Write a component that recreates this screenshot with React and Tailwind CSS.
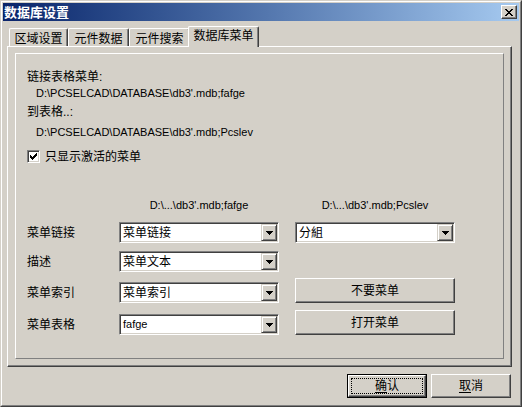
import React from "react";

const FONT = "font-['Liberation_Sans','Noto_Sans_CJK_SC',sans-serif]";

function Arrow() {
  return (
    <svg width="7" height="4" viewBox="0 0 7 4" shapeRendering="crispEdges">
      <path d="M0 0h7v1H0z M1 1h5v1H1z M2 2h3v1H2z M3 3h1v1H3z" fill="#000" />
    </svg>
  );
}

function Combo({ text, latin }) {
  return (
    <div className="w-[160px] h-[21px] flex bg-white border border-t-[#808080] border-l-[#808080] border-r-white border-b-white shadow-[inset_1px_1px_#404040,inset_-1px_-1px_#d4d0c8] p-px">
      <div className={"flex-1 flex items-center pl-[2px] leading-none " + (latin ? "text-[11px]" : "text-[12px]")}>{text}</div>
      <div className="w-[16px] h-[17px] bg-[#d4d0c8] border border-t-[#d4d0c8] border-l-[#d4d0c8] border-r-[#404040] border-b-[#404040] shadow-[inset_1px_1px_white,inset_-1px_-1px_#808080] flex items-center justify-center">
        <Arrow />
      </div>
    </div>
  );
}

function Btn({ children }) {
  return (
    <div className="w-[160px] h-[25px] flex items-center justify-center text-[12px] border border-t-white border-l-white border-r-[#404040] border-b-[#404040] shadow-[inset_-1px_-1px_#808080]">
      {children}
    </div>
  );
}

export default function App() {
  return (
    <div className={"w-[522px] h-[407px] bg-[#d4d0c8] text-black border border-t-[#d4d0c8] border-l-[#d4d0c8] border-r-[#404040] border-b-[#404040] " + FONT}>
      <div className="h-full border border-t-white border-l-white border-r-[#808080] border-b-[#808080] p-px flex flex-col">
        {/* Title bar */}
        <div className="h-[18px] flex items-center bg-linear-to-r from-[#0a246a] to-[#a6caf0] pr-[2px]">
          <span className="text-white font-bold text-[13px] leading-none pl-px">数据库设置</span>
          <div className="ml-auto w-[16px] h-[14px] bg-[#d4d0c8] border border-t-white border-l-white border-r-[#404040] border-b-[#404040] shadow-[inset_-1px_-1px_#808080] flex items-center justify-center">
            <svg width="8" height="7" viewBox="0 0 8 7" shapeRendering="crispEdges" className="-ml-px">
              <path d="M0 0h2v1H0z M6 0h2v1H6z M1 1h2v1H1z M5 1h2v1H5z M2 2h4v1H2z M3 3h2v1H3z M2 4h4v1H2z M1 5h2v1H1z M5 5h2v1H5z M0 6h2v1H0z M6 6h2v1H6z" fill="#000" />
            </svg>
          </div>
        </div>

        {/* Tabs */}
        <div className="mt-[5px] ml-[6px] h-[20px] flex items-end relative z-10">
          <div className="w-[59px] h-[18px] flex items-center justify-center pt-[2px] text-[12px] border-t border-l border-t-white border-l-white border-r border-r-[#404040] shadow-[inset_-1px_0_#808080] rounded-tl-[2px] rounded-tr-[2px]">区域设置</div>
          <div className="w-[61px] h-[18px] flex items-center justify-center pt-[2px] text-[12px] border-t border-l border-t-white border-l-white border-r border-r-[#404040] shadow-[inset_-1px_0_#808080] rounded-tl-[2px] rounded-tr-[2px]">元件数据</div>
          <div className="w-[61px] h-[18px] flex items-center justify-center pt-[2px] text-[12px] border-t border-l border-t-white border-l-white border-r border-r-[#404040] shadow-[inset_-1px_0_#808080] rounded-tl-[2px] rounded-tr-[2px]">元件搜索</div>
          <div className="-ml-[2px] w-[71px] h-[21px] -mb-px bg-[#d4d0c8] flex items-center justify-center pb-[2px] text-[12px] border-t border-l border-t-white border-l-white border-r border-r-[#404040] shadow-[inset_-1px_0_#808080] rounded-tl-[2px] rounded-tr-[2px]">数据库菜单</div>
        </div>

        {/* Panel */}
        <div className="ml-[4px] w-[505px] h-[321px] border border-t-white border-l-white border-r-[#404040] border-b-[#404040] shadow-[inset_-1px_-1px_#808080] pl-[7px] pt-[6px]">
          <div className="w-[489px] h-[306px] border border-t-white border-l-white border-r-[#808080] border-b-[#808080] flex flex-col pl-[11px] pt-[16px]">
            <div className="h-[14px] leading-[14px] text-[12px]">链接表格菜单:</div>
            <div className="mt-[2px] ml-[9px] h-[14px] leading-[14px] text-[11px]">D:\PCSELCAD\DATABASE\db3'.mdb;fafge</div>
            <div className="mt-[5px] h-[14px] leading-[14px] text-[12px]">到表格..:</div>
            <div className="mt-[6px] ml-[9px] h-[14px] leading-[14px] text-[11px]">D:\PCSELCAD\DATABASE\db3'.mdb;Pcslev</div>

            <div className="mt-[11px] h-[13px] flex items-center">
              <div className="w-[13px] h-[13px] bg-white border border-t-[#808080] border-l-[#808080] border-r-white border-b-white shadow-[inset_1px_1px_#404040,inset_-1px_-1px_#d4d0c8] flex items-center justify-center">
                <svg width="7" height="7" viewBox="0 0 7 7" shapeRendering="crispEdges">
                  <path d="M6 0h1v1h-1z M5 1h2v1h-2z M0 2h1v1h-1z M4 2h3v1h-3z M0 3h2v1h-2z M3 3h3v1h-3z M0 4h5v1h-5z M1 5h3v1h-3z M2 6h1v1h-1z" fill="#000" />
                </svg>
              </div>
              <span className="ml-[5px] text-[12px] leading-none">只显示激活的菜单</span>
            </div>

            <div className="mt-[35px] h-[14px] flex text-[11px] leading-[14px]">
              <div className="w-[92px]" />
              <div className="w-[160px] text-center">D:\...\db3'.mdb;fafge</div>
              <div className="w-[16px]" />
              <div className="w-[160px] text-center">D:\...\db3'.mdb;Pcslev</div>
            </div>

            <div className="mt-[10px] flex items-end">
              <div className="w-[92px] h-[21px] flex items-center text-[12px]">菜单链接</div>
              <Combo text="菜单链接" />
              <div className="w-[16px]" />
              <Combo text="分組" />
            </div>

            <div className="mt-[8px] flex items-end">
              <div className="w-[92px] h-[21px] flex items-center text-[12px]">描述</div>
              <Combo text="菜单文本" />
            </div>

            <div className="mt-[6px] flex items-end">
              <div className="w-[92px] h-[21px] flex items-center text-[12px]">菜单索引</div>
              <Combo text="菜单索引" />
              <div className="w-[16px]" />
              <Btn>不要菜单</Btn>
            </div>

            <div className="mt-[7px] flex items-end">
              <div className="w-[92px] h-[21px] flex items-center text-[12px]">菜单表格</div>
              <Combo text="fafge" latin />
              <div className="w-[16px]" />
              <Btn>打开菜单</Btn>
            </div>
          </div>
        </div>

        {/* Bottom buttons */}
        <div className="mt-[7px] flex justify-end pr-[8px] gap-[4px]">
          <div className="w-[80px] h-[24px] border border-black">
            <div className="w-full h-full border border-t-white border-l-white border-r-[#404040] border-b-[#404040] shadow-[inset_-1px_-1px_#808080] p-[2px]">
              <div className="w-full h-full border border-dotted border-black flex items-center justify-center text-[12px] leading-none">
                <span className="underline underline-offset-2">确</span>认
              </div>
            </div>
          </div>
          <div className="w-[80px] h-[24px] border border-t-white border-l-white border-r-[#404040] border-b-[#404040] shadow-[inset_-1px_-1px_#808080] flex items-center justify-center text-[12px] leading-none">
            <span className="underline underline-offset-2">取</span>消
          </div>
        </div>
      </div>
    </div>
  );
}
